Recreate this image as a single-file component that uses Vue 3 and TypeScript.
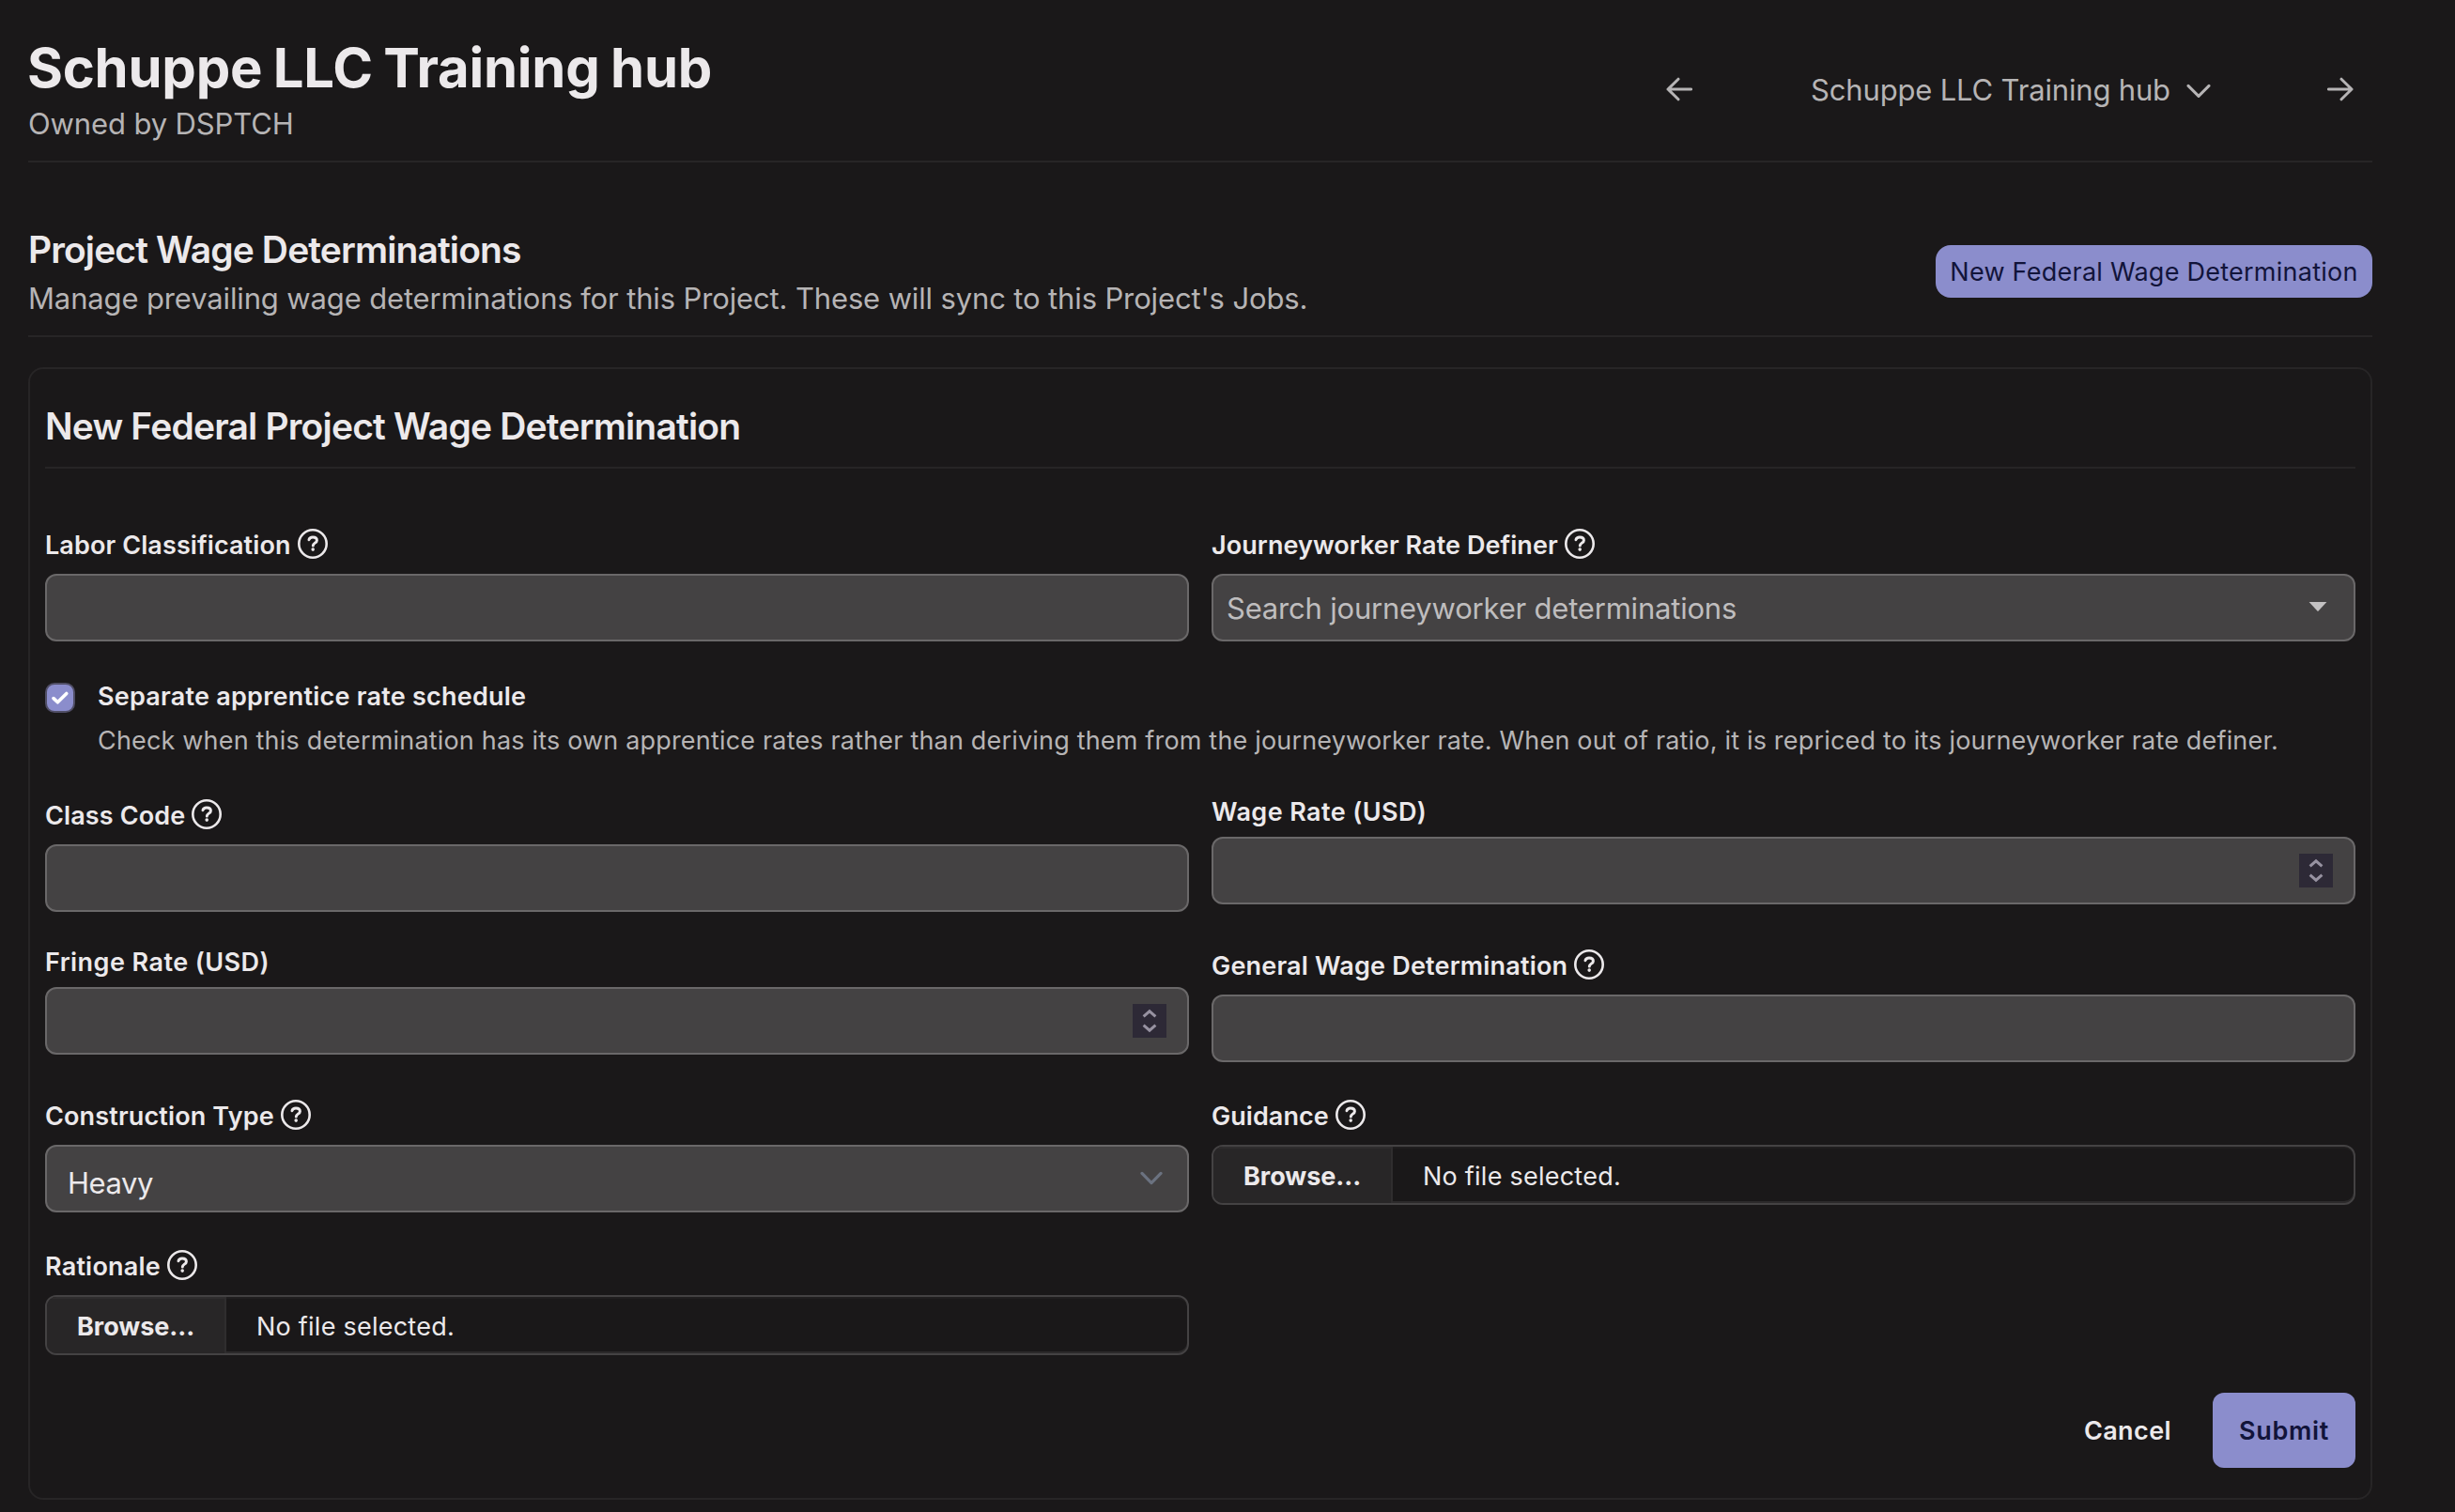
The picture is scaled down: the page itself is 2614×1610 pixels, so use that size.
<script setup lang="ts">
type Kind = 'text' | 'number' | 'search' | 'select' | 'file' | 'check'

interface Field {
  label: string
  kind: Kind
  help?: boolean
  value?: string
  hint?: string
  tracking: number
}

const fields: Field[] = [
  { label: 'Labor Classification', kind: 'text', help: true, tracking: 0.1 },
  { label: 'Journeyworker Rate Definer', kind: 'search', help: true, value: 'Search journeyworker determinations', tracking: 0.07 },
  {
    label: 'Separate apprentice rate schedule',
    kind: 'check',
    hint: 'Check when this determination has its own apprentice rates rather than deriving them from the journeyworker rate. When out of ratio, it is repriced to its journeyworker rate definer.',
    tracking: 0.235,
  },
  { label: 'Class Code', kind: 'text', help: true, tracking: 0.12 },
  { label: 'Wage Rate (USD)', kind: 'number', tracking: 0.4 },
  { label: 'Fringe Rate (USD)', kind: 'number', tracking: 0.44 },
  { label: 'General Wage Determination', kind: 'text', help: true, tracking: 0.19 },
  { label: 'Construction Type', kind: 'select', help: true, value: 'Heavy', tracking: 0.14 },
  { label: 'Guidance', kind: 'file', help: true, value: 'No file selected.', tracking: 0.05 },
  { label: 'Rationale', kind: 'file', help: true, value: 'No file selected.', tracking: 0.2 },
]
</script>

<template>
  <main class="page">
    <header class="top">
      <div>
        <h1>Schuppe LLC Training hub</h1>
        <p class="muted owner">Owned by DSPTCH</p>
      </div>
      <nav class="nav">
        <svg width="28" height="28" viewBox="0 0 28 28" class="line">
          <path d="M13 3.2 2 14l11 10.8M2 14h24.6" />
        </svg>
        <span class="current">
          <span>Schuppe LLC Training hub</span>
          <svg width="26" height="16" viewBox="0 0 26 16" class="line chev">
            <path d="M2 2.4 13 13.4 24 2.4" />
          </svg>
        </span>
        <svg width="28" height="28" viewBox="0 0 28 28" class="line">
          <path d="M15 3.2 26 14 15 24.8M26 14H1.4" />
        </svg>
      </nav>
    </header>

    <section class="section">
      <div>
        <h2 class="project">Project Wage Determinations</h2>
        <p class="muted manage">Manage prevailing wage determinations for this Project. These will sync to this Project's Jobs.</p>
      </div>
      <button class="new" type="button">New Federal Wage Determination</button>
    </section>

    <form class="card" @submit.prevent>
      <h2 class="card-title">New Federal Project Wage Determination</h2>

      <div class="grid">
        <template v-for="field in fields" :key="field.label">
          <div v-if="field.kind === 'check'" class="check-row">
            <span class="checkbox">
              <svg width="28" height="28" viewBox="0 0 28 28">
                <path d="M7 14.6 11.4 18.8 20.8 9.4" />
              </svg>
            </span>
            <div class="check-text">
              <div class="label" :style="{ letterSpacing: field.tracking + 'px' }">{{ field.label }}</div>
              <div class="hint">{{ field.hint }}</div>
            </div>
          </div>

          <div v-else class="field">
            <div class="label-row" :class="{ tall: field.help }">
              <span class="label" :style="{ letterSpacing: field.tracking + 'px' }">{{ field.label }}</span>
              <svg v-if="field.help" class="help" width="32" height="32" viewBox="0 0 32 32">
                <circle cx="16" cy="16" r="14.7" />
                <path d="M12 11.7c.5-1.7 2.1-2.6 4-2.6 2.6 0 4.4 1.3 4.4 3.3 0 2.6-4.1 2.9-4.1 5.5" />
                <circle class="dot" cx="16.2" cy="22.1" r="1.8" />
              </svg>
            </div>

            <div v-if="field.kind === 'file'" class="file">
              <span class="browse">Browse...</span>
              <span class="file-name">{{ field.value }}</span>
            </div>
            <div v-else class="input" :class="field.kind">
              <span class="value">{{ field.value }}</span>
              <span v-if="field.kind === 'number'" class="stepper">
                <svg width="36" height="36" viewBox="0 0 36 36">
                  <path d="M11.6 13.4 18 7.8 24.4 13.4M11.6 22.6 18 28.2 24.4 22.6" />
                </svg>
              </span>
              <svg v-if="field.kind === 'search'" class="caret" width="20" height="10" viewBox="0 0 20 10">
                <path d="M.6 0h18.8L10.6 9.6q-.6.6-1.2 0z" />
              </svg>
              <svg v-if="field.kind === 'select'" class="select-chev" width="24" height="16" viewBox="0 0 24 16">
                <path d="M2 2.4 12 12.6 22 2.4" />
              </svg>
            </div>
          </div>
        </template>
      </div>

      <div class="actions">
        <button class="cancel" type="button">Cancel</button>
        <button class="submit" type="submit">Submit</button>
      </div>
    </form>
  </main>
</template>

<style>
html,
body {
  background: #1a1819;
}
</style>

<style scoped>
.page {
  box-sizing: border-box;
  min-height: 1610px;
  padding: 37px 88px 13px 30px;
  background: #1a1819;
  color: #ece9eb;
  font-family: Inter, 'Liberation Sans', sans-serif;
  font-size: 27px;
}

h1,
h2,
p {
  margin: 0;
  white-space: nowrap;
}

button {
  border: 0;
  padding: 0;
  background: none;
  color: inherit;
  font: inherit;
  white-space: nowrap;
}

svg {
  display: block;
  flex: none;
}

.muted {
  color: #b6b4b5;
  font-size: 31px;
  line-height: 48px;
}

.top {
  display: flex;
  justify-content: space-between;
  align-items: flex-start;
  height: 134px;
  border-bottom: 2px solid #272526;
}

h1 {
  font-size: 58px;
  font-weight: 700;
  line-height: 71px;
  letter-spacing: -0.25px;
  word-spacing: -2px;
  margin-left: -1px;
}

.owner {
  letter-spacing: -0.13px;
}

.nav {
  display: flex;
  justify-content: space-between;
  align-items: center;
  width: 732px;
  height: 48px;
  margin: 34px 20px 0 0;
  color: #b6b4b5;
  font-size: 31px;
  line-height: 49px;
}

.current {
  display: flex;
  align-items: center;
  gap: 17px;
  margin-left: 2px;
  letter-spacing: -0.171px;
  white-space: nowrap;
}

.line {
  fill: none;
  stroke: #b6b4b5;
  stroke-width: 3;
  stroke-linecap: round;
  stroke-linejoin: round;
}

.chev {
  margin-top: 4px;
}

.section {
  display: flex;
  justify-content: space-between;
  align-items: flex-start;
  height: 119px;
  margin-top: 65px;
  border-bottom: 2px solid #272526;
}

h2 {
  font-size: 39px;
  font-weight: 600;
  line-height: 56px;
}

.project {
  letter-spacing: -0.889px;
}

.manage {
  letter-spacing: -0.14px;
}

.new {
  height: 56px;
  width: 465px;
  margin-top: 23px;
  border-radius: 16px;
  background: #8b8dcc;
  color: #12143a;
  line-height: 58px;
  letter-spacing: 0.25px;
}

.card {
  box-sizing: border-box;
  height: 1206px;
  margin-top: 32px;
  padding: 33px 16px 32px;
  border: 2px solid #272526;
  border-radius: 16px;
}

.card-title {
  padding-bottom: 15px;
  border-bottom: 2px solid #272526;
  letter-spacing: -0.82px;
}

.grid {
  display: grid;
  grid-template-columns: 1fr 1fr;
  gap: 32px 24px;
  margin-top: 56px;
}

.field {
  display: flex;
  flex-direction: column;
  gap: 8px;
}

.label-row {
  display: flex;
  align-items: center;
  gap: 7px;
  height: 40px;
}

.label-row.tall {
  height: 48px;
}

.label {
  font-weight: 600;
  line-height: 40px;
  white-space: nowrap;
}

.label-row .label {
  padding-top: 3px;
}

.help {
  fill: none;
  stroke: #ece9eb;
  stroke-width: 2.6;
  stroke-linecap: round;
}

.help path {
  stroke-width: 3;
}

.help .dot {
  fill: #ece9eb;
  stroke: none;
}

.input {
  box-sizing: border-box;
  display: flex;
  align-items: center;
  justify-content: space-between;
  height: 72px;
  padding: 0 22px 0 14px;
  border: 2px solid #6a6869;
  border-radius: 12px;
  background: #444243;
  font-size: 31px;
}

.search {
  padding-right: 28px;
}

.search .value {
  color: #bfbdbe;
  letter-spacing: -0.2px;
}

.select {
  padding: 0 26px 0 22px;
}

.select .value {
  padding-top: 9px;
  letter-spacing: -0.447px;
}

.stepper {
  background: #2d2936;
}

.stepper path {
  fill: none;
  stroke: #9792a1;
  stroke-width: 3;
}

.caret {
  fill: #c3c1c2;
  margin-top: -2px;
}

.select-chev path {
  fill: none;
  stroke: #6b7280;
  stroke-width: 3.2;
  stroke-linecap: round;
  stroke-linejoin: round;
}

.file {
  box-sizing: border-box;
  display: flex;
  height: 64px;
  border: 2px solid #444243;
  border-radius: 12px;
  overflow: hidden;
  line-height: 63px;
  box-shadow: inset 0 2px #201e1f, inset 0 -2px #2c2a2b;
}

.browse {
  box-sizing: border-box;
  width: 191px;
  padding-left: 32px;
  border-right: 2px solid #2f2d2e;
  background: #282627;
  box-shadow: inset 0 2px #2f2d2e;
  font-weight: 700;
  letter-spacing: -0.03px;
}

.file-name {
  margin-left: 32px;
  letter-spacing: 0.24px;
}

.check-row {
  grid-column: 1 / -1;
  display: flex;
  gap: 24px;
  height: 96px;
}

.checkbox {
  box-sizing: border-box;
  width: 32px;
  height: 32px;
  margin-top: 12px;
  border: 2px solid #504e66;
  border-radius: 10px;
  background: #8b8dcc;
}

.checkbox path {
  fill: none;
  stroke: #fff;
  stroke-width: 3.6;
  stroke-linecap: round;
  stroke-linejoin: round;
}

.check-text {
  padding-top: 3px;
}

.check-text .label,
.hint {
  line-height: 47px;
}

.hint {
  color: #b6b4b5;
  letter-spacing: 0.18px;
  white-space: nowrap;
}

.actions {
  display: flex;
  justify-content: flex-end;
  gap: 44px;
  margin-top: 40px;
  font-weight: 600;
  line-height: 82px;
}

.cancel {
  letter-spacing: 0.4px;
}

.submit {
  width: 152px;
  height: 80px;
  border-radius: 12px;
  background: #8b8dcc;
  color: #12143a;
  letter-spacing: 0.7px;
}
</style>
